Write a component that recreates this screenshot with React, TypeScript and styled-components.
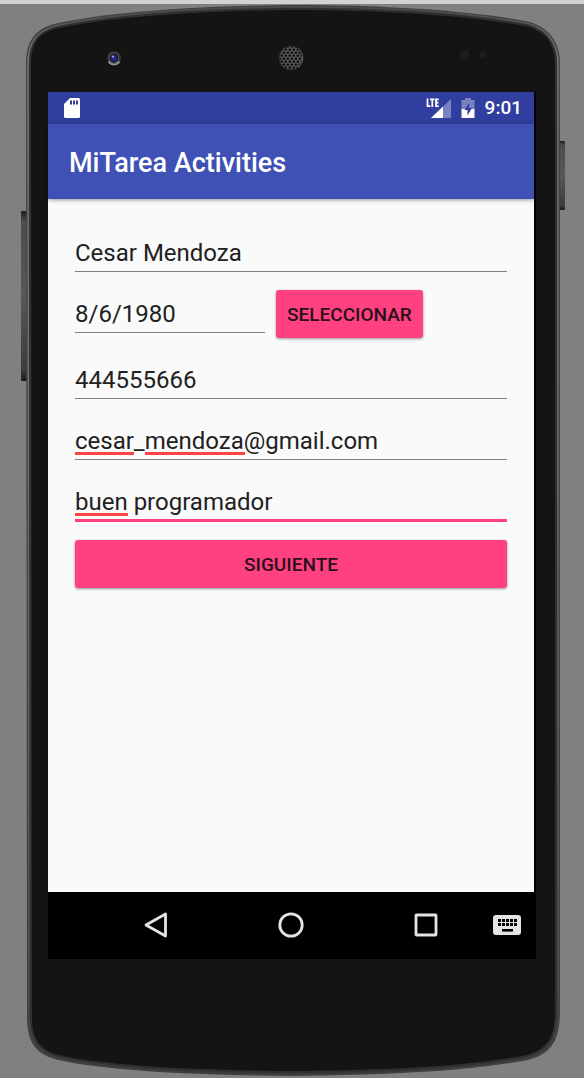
import React from "react";
import styled, { createGlobalStyle } from "styled-components";

const GlobalStyle = createGlobalStyle`
  * { box-sizing: border-box; }
  body {
    margin: 0;
    background: #808080;
    font-family: Roboto, "Liberation Sans", sans-serif;
  }
`;

const Page = styled.main`
  display: flex;
  flex-direction: column;
  min-height: 100vh;
  border-top: 4px solid #d2d2d2;
`;

const Device = styled.div`
  position: relative;
  isolation: isolate;
  flex: 1;
  display: flex;
  flex-direction: column;
  padding: 0 48px;
`;

const Shell = styled.svg`
  position: absolute;
  inset: 0;
  z-index: -1;
  width: 100%;
  height: 100%;
`;

const Earpiece = styled.div`
  display: flex;
  justify-content: space-between;
  align-items: center;
  height: 88px;
  padding: 20px 48px 0 57px;

  svg { display: block; }
`;

const Screen = styled.section`
  flex: 1;
  display: flex;
  flex-direction: column;
  background: #000;
`;

const AppWindow = styled.div`
  flex: 1;
  display: flex;
  flex-direction: column;
  margin-right: 2px;
  background: #fafafa;
`;

const StatusBar = styled.div`
  display: flex;
  align-items: center;
  gap: 10px;
  height: 32px;
  padding: 0 12px 0 16px;
  background: #303f9f;
  color: #fff;
  font-size: 19px;
  font-weight: 500;
  line-height: 24px;

  svg { display: block; }
`;

const Spacer = styled.span`
  flex: 1;
`;

const AppBar = styled.header`
  display: flex;
  align-items: center;
  height: 75px;
  padding: 2px 21px 0;
  background: #3f51b5;
  box-shadow: 0 1px 4px rgba(0, 0, 0, 0.4);
`;

const Title = styled.h1`
  margin: 0;
  color: #fff;
  font-size: 27px;
  font-weight: 500;
  line-height: 32px;
`;

const Form = styled.form`
  flex: 1;
  display: flex;
  flex-direction: column;
  gap: 18px;
  padding: 30px 27px;
`;

const Row = styled.div`
  display: flex;
  align-items: flex-start;
  gap: 11px;
`;

const FieldBox = styled.div<{ $short?: boolean }>`
  position: relative;
  width: ${(p) => (p.$short ? "44%" : "100%")};
`;

const Input = styled.input<{ $active?: boolean }>`
  display: block;
  width: 100%;
  height: ${(p) => (p.$active ? 44 : 43)}px;
  padding: 10px 0 4px;
  border: 0;
  border-bottom: ${(p) => (p.$active ? "3px solid #ff4081" : "1px solid #808080")};
  border-radius: 0;
  outline: 0;
  background: transparent;
  color: #212121;
  font-family: inherit;
  font-size: 24px;
  line-height: 28px;
`;

const SpellingMark = styled.span<{ $start: number; $length: number }>`
  position: absolute;
  top: 35px;
  left: ${(p) => p.$start}px;
  width: ${(p) => p.$length}px;
  height: 3px;
  background: #ff4444;
  pointer-events: none;
`;

const Button = styled.button`
  height: 48px;
  padding: 2px 11px 0;
  border: 0;
  border-radius: 3px;
  background: #ff4081;
  box-shadow: 0 1px 3px rgba(0, 0, 0, 0.4);
  color: #29101a;
  font-family: inherit;
  font-size: 19px;
  font-weight: 500;
  line-height: 24px;
  text-transform: uppercase;
  white-space: nowrap;
`;

const NavBar = styled.nav`
  position: relative;
  display: flex;
  justify-content: center;
  align-items: center;
  gap: 87px;
  height: 67px;
  padding: 0 3px 2px 0;
`;

const NavButton = styled.button<{ $corner?: boolean }>`
  display: grid;
  place-items: center;
  width: 48px;
  height: 48px;
  padding: 0;
  border: 0;
  background: transparent;
  ${(p) => p.$corner && "position: absolute; top: 9px; right: 5px;"}
`;

const Chin = styled.div`
  height: 119px;
`;

type Mark = { start: number; length: number };

function Field(props: {
  label: string;
  value: string;
  type?: string;
  short?: boolean;
  active?: boolean;
  marks?: Mark[];
}) {
  return (
    <FieldBox $short={props.short}>
      <Input
        aria-label={props.label}
        type={props.type ?? "text"}
        defaultValue={props.value}
        spellCheck={false}
        $active={props.active}
      />
      {props.marks?.map((m) => (
        <SpellingMark key={m.start} $start={m.start} $length={m.length} />
      ))}
    </FieldBox>
  );
}

function ShellArt() {
  const body =
    "M26 60 C26 36 36 25 54 20 C110 8 195 2 292 1 C390 1 475 7 530 18 C549 24 560 38 560 60 L560 1010 C559 1040 549 1050 528 1056 C470 1067 395 1071 292 1072 C190 1071 110 1067 58 1056 C36 1050 28 1040 27 1016 Z";
  const rim =
    "M28 60 C28 37 38 27 55 22 C110 10 195 4 292 3 C390 3 475 9 530 20 C547 26 558 39 558 60 L558 1010 C557 1038 547 1048 527 1054 C470 1065 395 1069 292 1070 C190 1069 110 1065 59 1054 C38 1048 30 1038 29 1014 Z";
  const face =
    "M31 60 C31 39 39 29 55 25 C110 13 195 7 292 6 C390 6 475 12 529 23 C546 28 555 41 555 60 L555 1010 C554 1036 546 1045 527 1051 C470 1062 395 1066 292 1067 C190 1066 110 1062 59 1051 C41 1046 32 1036 32 1014 Z";
  return (
    <Shell viewBox="0 0 584 1074" preserveAspectRatio="none" aria-hidden="true">
      <defs>
        <linearGradient id="key" x1="0" y1="0" x2="0" y2="1">
          <stop offset="0" stopColor="#1c1c1c" />
          <stop offset="0.06" stopColor="#4c4c4c" />
          <stop offset="0.5" stopColor="#585858" />
          <stop offset="0.94" stopColor="#3c3c3c" />
          <stop offset="1" stopColor="#161616" />
        </linearGradient>
        <linearGradient id="rim" x1="0" y1="0" x2="0" y2="1">
          <stop offset="0" stopColor="#4a4a4b" />
          <stop offset="0.05" stopColor="#77787b" />
          <stop offset="0.4" stopColor="#6c6d72" />
          <stop offset="0.9" stopColor="#505052" />
          <stop offset="1" stopColor="#3a3a3a" />
        </linearGradient>
      </defs>
      <rect x="21" y="207" width="7" height="170" rx="1" fill="url(#key)" />
      <rect x="558" y="137" width="7" height="69" rx="1" fill="url(#key)" />
      <path d={body} fill="#404143" />
      <path d={rim} fill="#303032" stroke="url(#rim)" strokeWidth="1.5" />
      <path d={face} fill="#141414" />
    </Shell>
  );
}

function Camera() {
  return (
    <svg width="18" height="18" viewBox="0 0 18 18" aria-hidden="true">
      <circle cx="9" cy="9" r="7" fill="#333335" />
      <path d="M3.500 12.500a6.500 6.500 0 0 0 11 0" fill="none" stroke="#98989a" strokeWidth="1.500" />
      <circle cx="9" cy="9" r="5.200" fill="#5c5c60" />
      <circle cx="9" cy="9" r="4.400" fill="#17171d" />
      <circle cx="9" cy="9.300" r="3" fill="#23238c" />
      <circle cx="8" cy="7.600" r="1.200" fill="#a0a0c0" />
    </svg>
  );
}

function Speaker() {
  return (
    <svg width="26" height="26" viewBox="0 0 26 26" aria-hidden="true">
      <defs>
        <pattern id="mesh" width="4" height="6" patternUnits="userSpaceOnUse">
          <rect width="4" height="6" fill="#5a5a5a" />
          <rect x="0.500" y="0.500" width="2.600" height="2.200" rx="0.800" fill="#0a0a0a" />
          <rect x="2.500" y="3.500" width="2.600" height="2.200" rx="0.800" fill="#0a0a0a" />
          <rect x="-1.500" y="3.500" width="2.600" height="2.200" rx="0.800" fill="#0a0a0a" />
        </pattern>
      </defs>
      <circle cx="13" cy="13" r="12" fill="url(#mesh)" stroke="#2a2a2a" />
      <path d="M20 3.500a12 12 0 0 1 0 19" fill="none" stroke="#606060" />
    </svg>
  );
}

function Sensors() {
  return (
    <svg width="30" height="18" viewBox="0 0 30 18" aria-hidden="true">
      <circle cx="7" cy="6" r="5" fill="#201c1d" />
      <circle cx="25" cy="6" r="3.500" fill="#201c1d" />
    </svg>
  );
}

function SdCardIcon() {
  return (
    <svg width="16" height="20" viewBox="0 0 16 20" aria-label="SD">
      <path d="M6 0h8.500a1.500 1.500 0 0 1 1.500 1.500v17a1.500 1.500 0 0 1-1.500 1.500h-13A1.500 1.500 0 0 1 0 18.500V6z" fill="#fff" />
      <path d="M6 2.500h2v4H6zM9 2.500h2v4H9zM12 2.500h2v4h-2z" fill="#303f9f" />
    </svg>
  );
}

function SignalIcon() {
  return (
    <svg width="25" height="21" viewBox="0 0 25 21" aria-label="LTE">
      <path d="M25 1v19H5z" fill="#7983c0" />
      <path d="M17 8.500V20H5z" fill="#fff" />
      <path d="M0 0h13.500v10H0z" fill="#303f9f" />
      <path d="M1.500 0.500v7.700h2.800M4 1.300h4.500M6.300 1v8M12.700 1.300h-2.700v6.900h2.700M10 4.700h2.500" fill="none" stroke="#fff" strokeWidth="1.800" />
    </svg>
  );
}

function BatteryIcon() {
  return (
    <svg width="14" height="20" viewBox="0 0 14 20" aria-label="Battery">
      <path d="M4 0h6v2h3.500v9H.5V2H4z" fill="#7983c0" />
      <path d="M.5 11h13v9H.5z" fill="#fff" />
      <path d="M8.500 4.500 3.500 12h3v5.500l4.500-7.500H8z" fill="#303f9f" />
    </svg>
  );
}

function BackIcon() {
  return (
    <svg width="28" height="28" viewBox="0 0 28 28" aria-hidden="true">
      <path d="M23.500 3v22L4 14z" fill="none" stroke="#e4e4e4" strokeWidth="2.800" strokeLinejoin="round" />
    </svg>
  );
}

function HomeIcon() {
  return (
    <svg width="28" height="28" viewBox="0 0 28 28" aria-hidden="true">
      <circle cx="14" cy="14" r="11.200" fill="none" stroke="#e4e4e4" strokeWidth="2.800" />
    </svg>
  );
}

function RecentsIcon() {
  return (
    <svg width="28" height="28" viewBox="0 0 28 28" aria-hidden="true">
      <rect x="4" y="4" width="20" height="20" rx="0.500" fill="none" stroke="#e4e4e4" strokeWidth="2.800" strokeLinejoin="round" />
    </svg>
  );
}

function KeyboardIcon() {
  return (
    <svg width="28" height="20" viewBox="0 0 28 20" aria-hidden="true">
      <rect width="28" height="20" rx="3" fill="#e4e4e4" />
      <path
        d="M5 5.500h19M5 9.500h19"
        stroke="#000"
        strokeWidth="2.800"
        strokeDasharray="3 1"
      />
      <path d="M9 15.300h11" stroke="#000" strokeWidth="2.600" />
    </svg>
  );
}

export default function App() {
  return (
    <>
      <GlobalStyle />
      <Page>
        <Device>
          <ShellArt />
          <Earpiece>
            <Camera />
            <Speaker />
            <Sensors />
          </Earpiece>
          <Screen>
            <AppWindow>
              <StatusBar>
                <SdCardIcon />
                <Spacer />
                <SignalIcon />
                <BatteryIcon />
                <span>9:01</span>
              </StatusBar>
              <AppBar>
                <Title>MiTarea Activities</Title>
              </AppBar>
              <Form onSubmit={(e) => e.preventDefault()}>
                <Field label="Nombre" value="Cesar Mendoza" />
                <Row>
                  <Field label="Fecha de nacimiento" value="8/6/1980" short />
                  <Button type="button">Seleccionar</Button>
                </Row>
                <Field label="Teléfono" type="tel" value="444555666" />
                <Field
                  label="Email"
                  type="email"
                  value="cesar_mendoza@gmail.com"
                  marks={[
                    { start: 0, length: 59 },
                    { start: 70, length: 100 },
                  ]}
                />
                <Field
                  label="Descripción"
                  value="buen programador"
                  active
                  marks={[{ start: 0, length: 53 }]}
                />
                <Button type="submit">Siguiente</Button>
              </Form>
            </AppWindow>
            <NavBar>
              <NavButton type="button" aria-label="Atrás">
                <BackIcon />
              </NavButton>
              <NavButton type="button" aria-label="Inicio">
                <HomeIcon />
              </NavButton>
              <NavButton type="button" aria-label="Recientes">
                <RecentsIcon />
              </NavButton>
              <NavButton type="button" aria-label="Teclado" $corner>
                <KeyboardIcon />
              </NavButton>
            </NavBar>
          </Screen>
          <Chin />
        </Device>
      </Page>
    </>
  );
}
